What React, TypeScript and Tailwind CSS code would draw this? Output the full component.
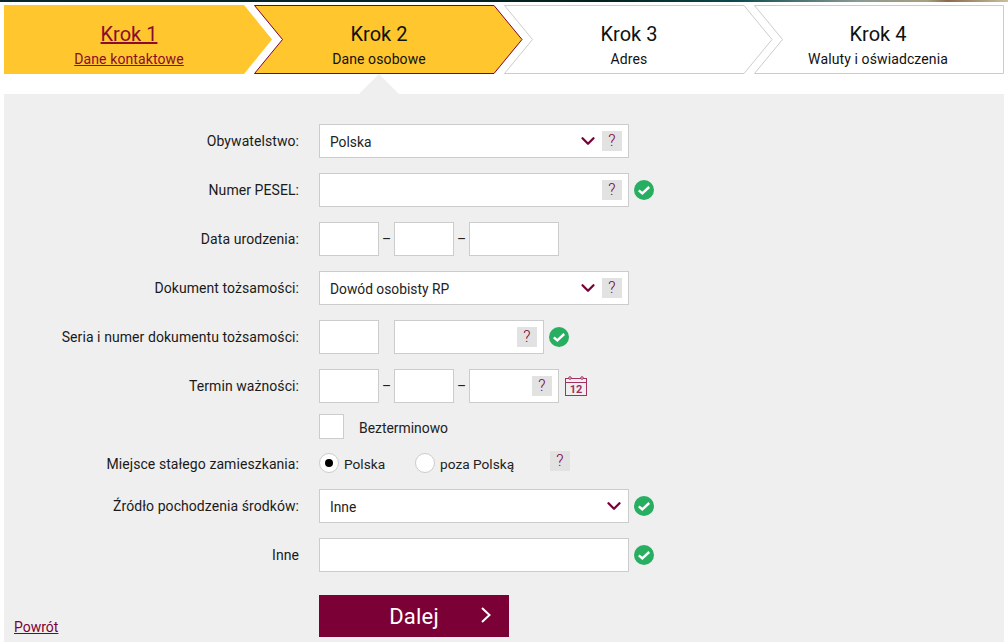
import React from 'react';
import { ChevronDown } from 'lucide-react';

// Kroki formularza
const steps = [
  { title: 'Krok 1', sub: 'Dane kontaktowe', state: 'done' },
  { title: 'Krok 2', sub: 'Dane osobowe', state: 'active' },
  { title: 'Krok 3', sub: 'Adres', state: 'todo' },
  { title: 'Krok 4', sub: 'Waluty i oświadczenia', state: 'todo' },
];

const field = 'h-[34px] border border-[#cccccc] bg-white';

const Help = () => (
  <span className="flex h-5 w-5 items-center justify-center bg-[#e2e2e2] text-[16px] font-light text-[#7b0035]">?</span>
);

const Check = () => (
  <svg width="20" height="20" viewBox="0 0 20 20" className="shrink-0">
    <circle cx="10" cy="10" r="10" fill="#27ae60" />
    <path d="M4.8 10.4 8.3 13.4 15.2 7" fill="none" stroke="#fff" strokeWidth="2.4" />
  </svg>
);

const Arrow = ({ step, index }: { step: (typeof steps)[number]; index: number }) => {
  const fill = step.state === 'todo' ? '#ffffff' : '#ffc62e';
  const stroke = step.state === 'active' ? '#7b0035' : '#cccccc';
  return (
    <svg width="270" height="69" viewBox="0 0 270 69" className="absolute left-0 top-0 overflow-visible">
      {index === 0 && <path d="M0 0 L240 0 L268 34.5 L240 69 L0 69 Z" fill={fill} />}
      {(index === 1 || index === 2) && (
        <path d="M0.5 0.5 L240 0.5 L268 34.5 L240 68.5 L0.5 68.5 L28.5 34.5 Z" fill={fill} stroke={stroke} />
      )}
      {index === 3 && (
        <path d="M0.5 0.5 L249.5 0.5 L249.5 68.5 L0.5 68.5 L28.5 34.5 Z" fill={fill} stroke={stroke} />
      )}
    </svg>
  );
};

const Row = ({ label, children, className = '', labelClass = '' }: { label: string; children: React.ReactNode; className?: string; labelClass?: string }) => (
  <div className={`flex items-center gap-5 ${className}`}>
    <label className={`w-[295px] text-right text-[14px] tracking-[0.07px] text-[#1a1a1a] ${labelClass}`}>{label}</label>
    {children}
  </div>
);

const Select = ({ value, help }: { value: string; help?: boolean }) => (
  <div className={`${field} flex w-[310px] items-center justify-between pl-[10px] ${help ? 'pr-[6px]' : 'pr-[3px]'} text-[14px] text-[#222222]`}>
    <span className="pt-[2px] text-[13.8px]">{value}</span>
    <span className="flex items-center gap-[3px]">
      <ChevronDown className="h-[22px] w-[22px] text-[#7b0035]" strokeWidth={2.5} />
      {help && <Help />}
    </span>
  </div>
);

const Dash = () => <span className="flex w-[15px] justify-center text-[14px] text-[#222222]">–</span>;

const Radio = ({ checked }: { checked?: boolean }) => (
  <span className="flex h-5 w-5 items-center justify-center rounded-full border border-[#cccccc] bg-white">
    {checked && <span className="h-2 w-2 rounded-full bg-black" />}
  </span>
);

export default function App() {
  return (
    <div className="h-[642px] w-[1008px] overflow-hidden bg-white font-['Roboto',sans-serif]">
      {/* pasek u gory */}
      <div className="h-[2px] bg-[linear-gradient(90deg,#06282c_0%,#03201e_60%,#0b4a50_73%,#8a9a94_85%,#a8a080_92%,#8a6a50_94%,#c8c0a0_100%)]" />

      {/* kroki */}
      <div className="mt-[3px] flex px-1">
        {steps.map((step, i) => (
          <div key={step.title} className="relative h-[69px] w-[250px]">
            <Arrow step={step} index={i} />
            <div className={`relative flex h-full flex-col items-center pt-[17px] ${i === 3 ? 'pr-[2px]' : ''} ${step.state === 'done' ? 'text-[#8a0c2c] underline' : 'text-[#111111]'}`}>
              <span className="text-[20px] leading-6">{step.title}</span>
              <span className="mt-[3px] text-[14px] leading-5 tracking-[0.11px]">{step.sub}</span>
            </div>
          </div>
        ))}
      </div>

      {/* trojkat wskazujacy aktywny krok */}
      <div className="mx-1 mt-0 flex h-5 pl-[355px]">
        <svg width="40" height="20" viewBox="0 0 40 20">
          <path d="M0 20 L20 0 L40 20 Z" fill="#efefef" />
        </svg>
      </div>

      {/* formularz */}
      <div className="relative mx-1 h-[548px] bg-[#efefef] pt-[30px]">
        <Row label="Obywatelstwo:">
          <Select value="Polska" help />
        </Row>

        <Row label="Numer PESEL:" className="mt-[15px]">
          <div className="flex items-center gap-[5px]">
            <div className={`${field} flex w-[310px] items-center justify-end pr-[6px]`}>
              <Help />
            </div>
            <Check />
          </div>
        </Row>

        <Row label="Data urodzenia:" className="mt-[15px]">
          <div className="flex items-center">
            <div className={`${field} w-[60px]`} />
            <Dash />
            <div className={`${field} w-[60px]`} />
            <Dash />
            <div className={`${field} w-[90px]`} />
          </div>
        </Row>

        <Row label="Dokument tożsamości:" className="mt-[15px]">
          <Select value="Dowód osobisty RP" help />
        </Row>

        <Row label="Seria i numer dokumentu tożsamości:" className="mt-[15px]">
          <div className="flex items-center gap-[15px]">
            <div className={`${field} w-[60px]`} />
            <div className="flex items-center gap-[5px]">
              <div className={`${field} flex w-[150px] items-center justify-end pr-[6px]`}>
                <Help />
              </div>
              <Check />
            </div>
          </div>
        </Row>

        <Row label="Termin ważności:" className="mt-[15px]">
          <div className="flex items-center">
            <div className={`${field} w-[60px]`} />
            <Dash />
            <div className={`${field} w-[60px]`} />
            <Dash />
            <div className={`${field} flex w-[90px] items-center justify-end pr-[6px]`}>
              <Help />
            </div>
            <svg width="22" height="20" viewBox="0 0 22 20" className="ml-[6px]" fill="none" stroke="#a3305f">
              <rect x="0.5" y="2.5" width="21" height="17" />
              <path d="M0.5 6.5 H21.5" />
              <circle cx="5" cy="2" r="1.3" fill="#efefef" />
              <circle cx="17" cy="2" r="1.3" fill="#efefef" />
              <text x="11" y="16.5" textAnchor="middle" fontSize="11" fontWeight="700" fill="#a3305f" stroke="none" fontFamily="Roboto, sans-serif">12</text>
            </svg>
          </div>
        </Row>

        <div className="ml-[315px] mt-[11px] flex items-center gap-[15px]">
          <div className="h-[25px] w-[25px] border border-[#cccccc] bg-white" />
          <span className="pt-[3px] text-[13.9px] text-[#222222]">Bezterminowo</span>
        </div>

        <Row label="Miejsce stałego zamieszkania:" className="mt-[14px] h-5" labelClass="pt-[2px]">
          <div className="flex items-center text-[13.7px] text-[#222222]">
            <Radio checked />
            <span className="ml-[5px] w-[71px] pt-[2px]">Polska</span>
            <Radio />
            <span className="ml-[5px] w-[110px] pt-[2px]">poza Polską</span>
            <span className="-mt-1"><Help /></span>
          </div>
        </Row>

        <Row label="Źródło pochodzenia środków:" className="mt-[16px]">
          <div className="flex items-center gap-[5px]">
            <Select value="Inne" />
            <Check />
          </div>
        </Row>

        <Row label="Inne" className="mt-[15px]">
          <div className="flex items-center gap-[5px]">
            <div className={`${field} w-[310px]`} />
            <Check />
          </div>
        </Row>

        <div className="ml-[315px] mt-[23px]">
          <button className="relative flex h-[42px] w-[190px] items-center justify-center bg-[#7b0035] text-[22px] tracking-[0.2px] text-white">
            Dalej
            <svg width="10" height="16" viewBox="0 0 10 16" className="absolute right-[18px] top-[12px]" fill="none" stroke="#fff" strokeWidth="2">
              <path d="M1 1 L8.5 8 L1 15" />
            </svg>
          </button>
        </div>

        <a className="absolute left-[10px] top-[523px] text-[14px] text-[#7b0035] underline">Powrót</a>
      </div>
    </div>
  );
}
